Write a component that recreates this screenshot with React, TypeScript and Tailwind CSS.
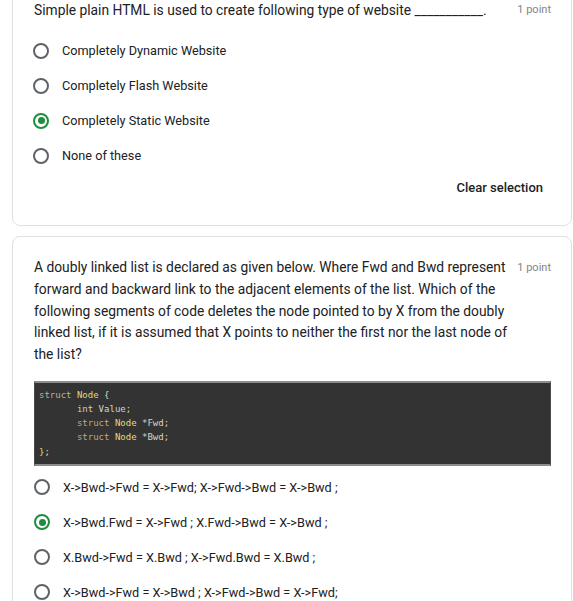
const font = { fontFamily: 'Roboto, "Liberation Sans", sans-serif' }

function Radio({ checked }: { checked?: boolean }) {
    return (
        <span
            className={
                'flex h-4 w-4 shrink-0 items-center justify-center rounded-full border-2 ' +
                (checked ? 'border-[#1e8e3e]' : 'border-[#5f6368]')
            }
        >
            {checked && <span className="h-[7px] w-[7px] rounded-full bg-[#1e8e3e]" />}
        </span>
    )
}

function Option({ label, checked }: { label: string; checked?: boolean }) {
    return (
        <div className="flex h-[35px] items-center">
            <div className="w-[29px] shrink-0">
                <Radio checked={checked} />
            </div>
            <span className="text-[12.7px] text-[#202124]">{label}</span>
        </div>
    )
}

function Points() {
    return <span className="shrink-0 pt-[1px] text-[11px] leading-[20px] text-[#80868b]">1 point</span>
}

export default function App() {
    return (
        <div className="min-h-[601px] overflow-hidden bg-white" style={font}>
            <section className="-mt-[22px] ml-3 w-[560px] rounded-lg border border-[#e0e0e0] bg-white pl-[21px] pr-5 pt-5 pb-[27px]">
                <div className="flex items-start justify-between">
                    <h2 className="text-[13.8px] leading-[22px] text-[#202124]">
                        Simple plain HTML is used to create following type of website ___________.
                    </h2>
                    <Points />
                </div>
                <div className="mt-[12px] -ml-[1px]">
                    <Option label="Completely Dynamic Website" />
                    <Option label="Completely Flash Website" />
                    <Option label="Completely Static Website" checked />
                    <Option label="None of these" />
                </div>
                <div className="mt-[5px] flex justify-end pr-2">
                    <button className="text-[13px] font-medium leading-5 text-[#202124]">Clear selection</button>
                </div>
            </section>

            <section className="ml-3 mt-[10px] w-[560px] rounded-lg border border-[#e0e0e0] bg-white pl-[21px] pr-5 pt-5 pb-6">
                <div className="flex items-start justify-between">
                    <p className="w-[485px] text-[13.8px] leading-[21.75px] text-[#202124]">
                        A doubly linked list is declared as given below. Where Fwd and Bwd represent forward and
                        backward link to the adjacent elements of the list. Which of the following segments of code
                        deletes the node pointed to by X from the doubly linked list, if it is assumed that X points
                        to neither the first nor the last node of the list?
                    </p>
                    <Points />
                </div>
                <pre
                    className="mt-[15px] border-y-2 border-x border-y-[#8c8c8c] border-x-[#4a4a4a] bg-[#333333] py-[5px] pl-1 text-[9px] leading-[14.2px] text-[#d6d6c8]"
                    style={{ fontFamily: '"DejaVu Sans Mono", "Liberation Mono", monospace' }}
                >
                    <span className="text-[#b4b39a]">struct</span> <span className="text-[#e3dc7c]">Node</span> {'{'}
                    {'\n'}
                    {'       '}<span className="text-[#cfcfc4]">int</span> Value;
                    {'\n'}
                    {'       '}<span className="text-[#c2a877]">struct</span> <span className="text-[#e3dc7c]">Node</span> *Fwd;
                    {'\n'}
                    {'       '}<span className="text-[#c2a877]">struct</span> <span className="text-[#e3dc7c]">Node</span> *Bwd;
                    {'\n'}
                    <span className="text-[#e3dc7c]">{'};'}</span>
                </pre>
                <div className="mt-[4px]">
                    <Option label="X->Bwd->Fwd = X->Fwd; X->Fwd->Bwd = X->Bwd ;" />
                    <Option label="X->Bwd.Fwd = X->Fwd ; X.Fwd->Bwd = X->Bwd ;" checked />
                    <Option label="X.Bwd->Fwd = X.Bwd ; X->Fwd.Bwd = X.Bwd ;" />
                    <Option label="X->Bwd->Fwd = X->Bwd ; X->Fwd->Bwd = X->Fwd;" />
                </div>
            </section>
        </div>
    )
}
